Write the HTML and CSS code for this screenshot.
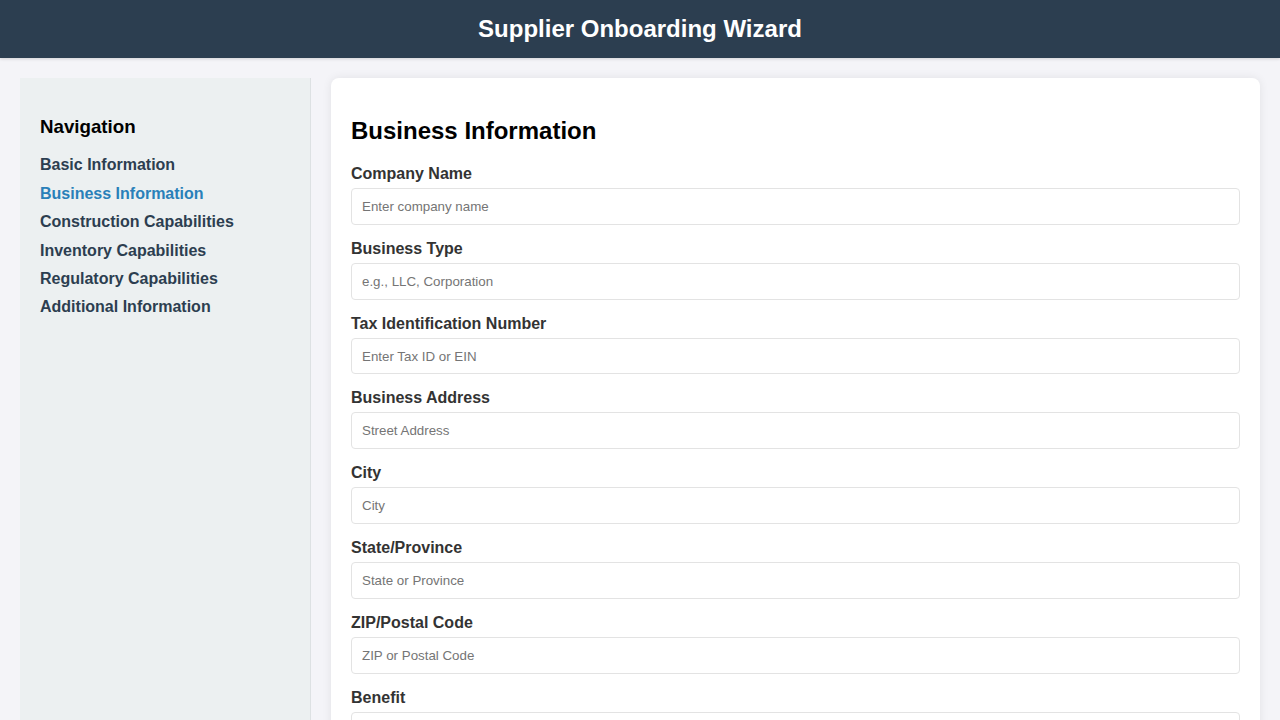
FILE: index.html
```html
<!DOCTYPE html>
<html lang="en">
<head>
<meta charset="utf-8">
<title>Supplier Onboarding Wizard</title>
<link rel="stylesheet" href="styles.css">
</head>
<body>
<header class="app-header">
  <h1 class="app-title">Supplier Onboarding Wizard</h1>
</header>
<div class="layout">
  <aside class="sidebar">
    <h3 class="sidebar-title">Navigation</h3>
    <ul class="nav-list">
      <li class="nav-item"><a class="nav-link" href="#">Basic Information</a></li>
      <li class="nav-item"><a class="nav-link active" href="#">Business Information</a></li>
      <li class="nav-item"><a class="nav-link" href="#">Construction Capabilities</a></li>
      <li class="nav-item"><a class="nav-link" href="#">Inventory Capabilities</a></li>
      <li class="nav-item"><a class="nav-link" href="#">Regulatory Capabilities</a></li>
      <li class="nav-item"><a class="nav-link" href="#">Additional Information</a></li>
    </ul>
  </aside>
  <main class="content">
    <h2 class="section-title">Business Information</h2>
    <div class="form-group">
      <label class="form-label" for="company">Company Name</label>
      <input class="form-input" id="company" type="text" placeholder="Enter company name">
    </div>
    <div class="form-group">
      <label class="form-label" for="btype">Business Type</label>
      <input class="form-input" id="btype" type="text" placeholder="e.g., LLC, Corporation">
    </div>
    <div class="form-group">
      <label class="form-label" for="tax">Tax Identification Number</label>
      <input class="form-input" id="tax" type="text" placeholder="Enter Tax ID or EIN">
    </div>
    <div class="form-group">
      <label class="form-label" for="addr">Business Address</label>
      <input class="form-input" id="addr" type="text" placeholder="Street Address">
    </div>
    <div class="form-group">
      <label class="form-label" for="city">City</label>
      <input class="form-input" id="city" type="text" placeholder="City">
    </div>
    <div class="form-group">
      <label class="form-label" for="state">State/Province</label>
      <input class="form-input" id="state" type="text" placeholder="State or Province">
    </div>
    <div class="form-group">
      <label class="form-label" for="zip">ZIP/Postal Code</label>
      <input class="form-input" id="zip" type="text" placeholder="ZIP or Postal Code">
    </div>
    <div class="form-group">
      <label class="form-label" for="benefit">Benefit</label>
      <input class="form-input" id="benefit" type="text" placeholder="Describe the benefit">
    </div>
  </main>
</div>
</body>
</html>
```

FILE: styles.css
```css
html, body {
  margin: 0;
  padding: 0;
}

body {
  font-family: "Liberation Sans", Arial, sans-serif;
  background: #f4f4f8;
  color: #333;
}

.app-header {
  background: #2c3e50;
  color: #fff;
  padding: 15px 20px;
  text-align: center;
  box-shadow: 0 1px 3px rgba(0, 0, 0, 0.15);
}

.app-title {
  margin: 0;
  font-size: 24px;
  font-weight: bold;
}

.layout {
  display: flex;
  gap: 20px;
  padding: 20px;
  align-items: stretch;
}

.sidebar {
  width: 250px;
  flex: 0 0 250px;
  padding: 20px;
  background: #ecf0f1;
  border-right: 1px solid #dde1e3;
}

.sidebar-title {
  font-size: 18.72px;
  margin: 17.7px 0 18.72px;
  color: #000;
}

.nav-list {
  list-style: none;
  margin: 0;
  padding: 0;
}

.nav-item {
  margin-bottom: 10px;
  line-height: 18.4px;
}

.nav-link {
  color: #2c3e50;
  font-weight: bold;
  font-size: 16px;
  text-decoration: none;
}

.nav-link.active {
  color: #2980b9;
}

.content {
  flex: 1;
  background: #fff;
  padding: 20px;
  border-radius: 8px;
  box-shadow: 0 0 10px rgba(0, 0, 0, 0.08);
}

.section-title {
  font-size: 24px;
  margin: 19px 0 20px;
  color: #000;
}

.form-group {
  margin-bottom: 15px;
}

.form-label {
  display: block;
  font-weight: bold;
  font-size: 16px;
  line-height: 18px;
  margin-bottom: 5px;
  color: #333;
}

.form-input {
  display: block;
  width: 100%;
  height: 36.8px;
  box-sizing: border-box;
  padding: 10px;
  border: 1px solid #e3e3e3;
  border-radius: 4px;
  font-family: "Liberation Sans", Arial, sans-serif;
  font-size: 13.333px;
  color: #333;
  background: #fff;
}

.form-input::placeholder {
  color: #757575;
}
```
